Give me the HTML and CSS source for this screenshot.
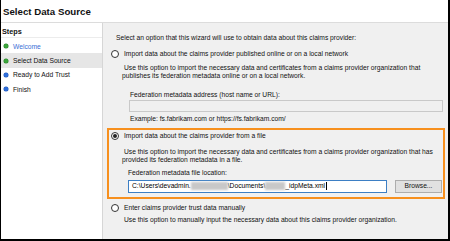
FILE: index.html
```html
<!DOCTYPE html>
<html>
<head>
<meta charset="utf-8">
<link rel="stylesheet" href="styles.css">
</head>
<body>
<div class="frame">
  <div class="header">Select Data Source</div>
  <div class="main">
    <div class="steps">
      <div class="steps-title">Steps</div>
      <ul class="step-list">
        <li class="step"><span class="dot green"></span><span class="link">Welcome</span></li>
        <li class="step current"><span class="dot green"></span>Select Data Source</li>
        <li class="step"><span class="dot blue"></span>Ready to Add Trust</li>
        <li class="step"><span class="dot blue"></span>Finish</li>
      </ul>
    </div>
    <div class="content">
      <p class="intro">Select an option that this wizard will use to obtain data about this claims provider:</p>

      <div class="option opt1">
        <div class="radio-row"><span class="radio"></span>Import data about the claims provider published online or on a local network</div>
        <p class="desc">Use this option to import the necessary data and certificates from a claims provider organization that publishes its federation metadata online or on a local network.</p>
        <p class="field-label">Federation metadata address (host name or URL):</p>
        <div class="input disabled"></div>
        <p class="example">Example: fs.fabrikam.com or https://fs.fabrikam.com/</p>
      </div>

      <div class="option opt2 selected">
        <div class="radio-row"><span class="radio checked"></span>Import data about the claims provider from a file</div>
        <p class="desc">Use this option to import the necessary data and certificates from a claims provider organization that has provided its federation metadata in a file.</p>
        <p class="field-label">Federation metadata file location:</p>
        <div class="file-row">
          <div class="input focused">C:\Users\devadmin.<span class="blur b1"></span>\Documents\<span class="blur b2"></span>_idpMeta.xml<span class="caret"></span></div>
          <div class="button">Browse...</div>
        </div>
      </div>

      <div class="option opt3">
        <div class="radio-row"><span class="radio"></span>Enter claims provider trust data manually</div>
        <p class="desc">Use this option to manually input the necessary data about this claims provider organization.</p>
      </div>
    </div>
  </div>
</div>
</body>
</html>
```
FILE: styles.css
```css
* { box-sizing: border-box; }
html, body { margin: 0; padding: 0; }
body {
  width: 450px;
  height: 241px;
  background: #fff;
  font-family: "Liberation Sans", Arial, sans-serif;
  color: #111;
  overflow: hidden;
}
p { margin: 0; }
.frame {
  width: 450px;
  height: 241px;
  border-left: 1px solid #000;
  border-right: 2px solid #000;
  border-bottom: 2px solid #000;
  display: flex;
  flex-direction: column;
}
.header {
  height: 23px;
  flex: none;
  font-weight: bold;
  font-size: 9.7px;
  padding-left: 2px;
  display: flex;
  align-items: center;
  border-bottom: 1px solid #dcdcdc;
  background: #fff;
}
.main {
  flex: 1;
  display: flex;
  min-height: 0;
}
.steps {
  width: 102px;
  flex: none;
  background: #fff;
  border-right: 1px solid #d6d6d6;
  padding-top: 3px;
}
.steps-title {
  font-weight: bold;
  font-size: 7.3px;
  height: 12px;
  line-height: 12px;
  padding-left: 1px;
  border-bottom: 1px solid #ececec;
}
.step-list {
  list-style: none;
  margin: 0;
  padding: 1px 0 0;
}
.step {
  height: 14.4px;
  display: flex;
  align-items: center;
  font-size: 6.7px;
  padding-left: 3px;
}
.step.current { background: #e6e6e6; }
.dot {
  width: 4px;
  height: 4px;
  border-radius: 50%;
  margin-right: 5px;
  flex: none;
}
.dot.green { background: #3ca63c; box-shadow: 0 0 0 0.5px #2b842b; }
.dot.blue { background: #2f6fdc; box-shadow: 0 0 0 0.5px #2057b8; }
.link { color: #3a6fd6; }

.content {
  flex: 1;
  background: #f0f0f0;
  padding: 11px 3px 0 4px;
  font-size: 6.7px;
  line-height: 7.5px;
}
.intro {
  margin-left: 9px;
  line-height: 8px;
}
.option { padding-left: 4px; }
.opt1 { margin-top: 8px; }
.radio-row {
  display: flex;
  align-items: center;
  height: 8px;
}
.radio {
  width: 8px;
  height: 8px;
  border-radius: 50%;
  border: 1px solid #333;
  background: #fff;
  margin-right: 5px;
  flex: none;
  display: flex;
  align-items: center;
  justify-content: center;
}
.radio.checked::after {
  content: "";
  width: 4px;
  height: 4px;
  border-radius: 50%;
  background: #222;
}
.desc {
  margin-left: 11px;
  margin-top: 6px;
  text-indent: 2px;
}
.field-label {
  margin-left: 19px;
  margin-top: 12px;
}
.input {
  height: 12px;
  margin-left: 18px;
  margin-right: 2px;
  margin-top: 1px;
  border: 1px solid #c9c9c9;
  background: #f0f0f0;
}
.example {
  margin-left: 19px;
  margin-top: 3px;
}
.opt2 {
  margin-top: 6px;
  border: 2px solid #f7901e;
  padding: 2px 0 4px 2px;
}
.opt2 .desc { margin-top: 8px; }
.opt2 .field-label { margin-top: 6px; margin-left: 17px; }
.file-row {
  display: flex;
  margin-top: 3px;
  margin-left: 17px;
}
.input.focused {
  margin: 0;
  width: 259px;
  height: 13px;
  background: #fff;
  border: 1px solid #3d7fc4;
  display: flex;
  align-items: center;
  padding-left: 3px;
  white-space: nowrap;
  color: #000;
}
.blur {
  display: inline-block;
  height: 8px;
  background: #c8c8c8;
  filter: blur(1.2px);
}
.b1 { width: 37px; }
.b2 { width: 20px; }
.caret {
  display: inline-block;
  width: 1px;
  height: 8px;
  background: #000;
  margin-left: 1px;
}
.button {
  margin-left: 8px;
  width: 47px;
  height: 13px;
  border: 1px solid #adadad;
  background: #e1e1e1;
  display: flex;
  align-items: center;
  justify-content: center;
}
.opt3 { margin-top: 5px; }
.opt3 .desc { margin-top: 4px; }
```
